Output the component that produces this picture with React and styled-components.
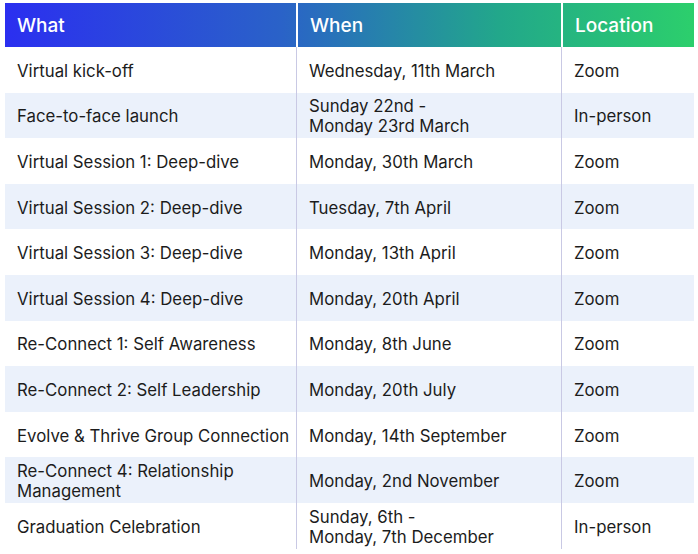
import React from 'react';
import styled, { createGlobalStyle } from 'styled-components';

const rows = [
  ['Virtual kick-off', 'Wednesday, 11th March', 'Zoom'],
  ['Face-to-face launch', 'Sunday 22nd -\nMonday 23rd March', 'In-person'],
  ['Virtual Session 1: Deep-dive', 'Monday, 30th March', 'Zoom'],
  ['Virtual Session 2: Deep-dive', 'Tuesday, 7th April', 'Zoom'],
  ['Virtual Session 3: Deep-dive', 'Monday, 13th April', 'Zoom'],
  ['Virtual Session 4: Deep-dive', 'Monday, 20th April', 'Zoom'],
  ['Re-Connect 1: Self Awareness', 'Monday, 8th June', 'Zoom'],
  ['Re-Connect 2: Self Leadership', 'Monday, 20th July', 'Zoom'],
  ['Evolve & Thrive Group Connection', 'Monday, 14th September', 'Zoom'],
  ['Re-Connect 4: Relationship\nManagement', 'Monday, 2nd November', 'Zoom'],
  ['Graduation Celebration', 'Sunday, 6th -\nMonday, 7th December', 'In-person'],
];

const App = () => {
  return (
    <>
      <GlobalStyle />
      <Page>
        <Table>
          <HeaderRow>
            <HeadCell>What</HeadCell>
            <HeadCell divider>When</HeadCell>
            <HeadCell divider>Location</HeadCell>
          </HeaderRow>
          {rows.map((r, i) => (
            <Row key={i} striped={i % 2 === 1}>
              <Cell>{r[0]}</Cell>
              <Cell divider>{r[1]}</Cell>
              <Cell divider>{r[2]}</Cell>
            </Row>
          ))}
        </Table>
      </Page>
    </>
  );
};

const GlobalStyle = createGlobalStyle`
  body {
    margin: 0;
    background: #fff;
    font-family: Inter, "Open Sans", sans-serif;
  }
`;

const Page = styled.div`
  padding: 3px 0 0 5px;
`;

const Table = styled.div`
  width: 689px;
  display: flex;
  flex-direction: column;
`;

const HeaderRow = styled.div`
  display: grid;
  grid-template-columns: 291px 265px 133px;
  height: 44px;
  background: linear-gradient(90deg, #2b2ff0 0%, #2a62c8 40%, #22a88a 72%, #2ccf6c 100%);
`;

const HeadCell = styled.div`
  display: flex;
  align-items: center;
  padding-left: 12px;
  color: #fff;
  font-size: 19px;
  font-weight: 500;
  border-left: ${(p) => (p.divider ? '2px solid #fff' : 'none')};
`;

const Row = styled.div`
  display: grid;
  grid-template-columns: 291px 265px 133px;
  height: 45.6px;
  background: ${(p) => (p.striped ? '#ebf1fb' : '#fff')};
`;

const Cell = styled.div`
  display: flex;
  align-items: center;
  padding: 2px 0 0 12px;
  color: #1c1c1c;
  font-size: 16.8px;
  line-height: 20px;
  white-space: pre-line;
  border-left: ${(p) => (p.divider ? '1px solid #c9c9e4' : 'none')};
`;

export default App;
